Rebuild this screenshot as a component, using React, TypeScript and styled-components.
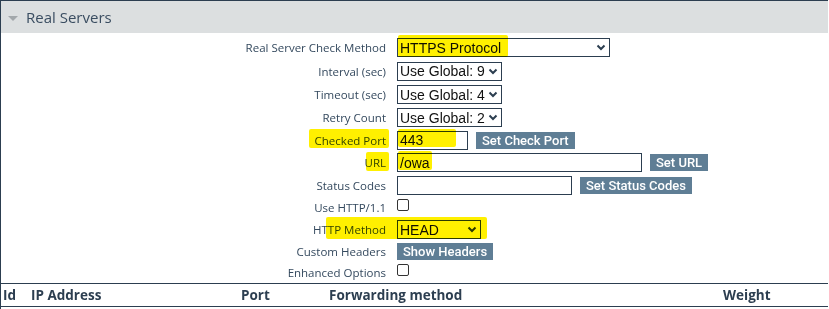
import React from "react";
import styled, { createGlobalStyle } from "styled-components";

const Global = createGlobalStyle`
  html, body { margin: 0; padding: 0; background: #ffffff; }
  body { width: 829px; height: 309px; overflow: hidden; }
`;

const Panel = styled.div`
  width: 828px;
  height: 309px;
  border-top: 1px solid #2c3e50;
  border-left: 1px solid #2c3e50;
  box-sizing: border-box;
  background: #fff;
`;

const Header = styled.div`
  height: 32px;
  background: #dcdfe0;
  display: flex;
  align-items: center;
  gap: 8px;
  padding-left: 7px;
  font-family: "Open Sans", sans-serif;
  font-size: 15px;
  color: #3a4d61;
`;

const Caret = styled.span`
  width: 0;
  height: 0;
  border-left: 5px solid transparent;
  border-right: 5px solid transparent;
  border-top: 5px solid #a3a8ab;
  margin-top: 2px;
`;

const Form = styled.div`
  position: relative;
  display: grid;
  grid-template-columns: 385px 1fr;
  column-gap: 11px;
  padding-top: 3px;
`;

const Label = styled.div<{ $h: number }>`
  height: ${(p) => p.$h}px;
  display: flex;
  align-items: center;
  justify-content: flex-end;
  font-family: "Open Sans", sans-serif;
  font-size: 11.5px;
  color: #34495e;
  white-space: nowrap;
`;

const Control = styled.div<{ $h: number; $top?: boolean }>`
  height: ${(p) => p.$h}px;
  display: flex;
  align-items: ${(p) => (p.$top ? "flex-start" : "center")};
  padding-top: ${(p) => (p.$top ? "2px" : "0")};
  box-sizing: border-box;
  gap: 8px;
`;

const SelectBox = styled.div<{ $w: number }>`
  width: ${(p) => p.$w}px;
  height: 19px;
  box-sizing: border-box;
  border: 1px solid #2c3e50;
  display: flex;
  align-items: center;
  justify-content: space-between;
  padding: 0 3px 0 2px;
  font-family: "Liberation Sans", Arial, sans-serif;
  font-size: 14px;
  color: #111;
  background: #fff;
`;

const TextInput = styled.div<{ $w: number }>`
  width: ${(p) => p.$w}px;
  height: 19px;
  box-sizing: border-box;
  border: 1px solid #2c3e50;
  display: flex;
  align-items: center;
  padding-left: 2px;
  font-family: "Liberation Sans", Arial, sans-serif;
  font-size: 14px;
  color: #111;
  background: #fff;
`;

const Button = styled.div`
  height: 17px;
  background: #5f7e95;
  color: #ffffff;
  font-family: Roboto, "Liberation Sans", sans-serif;
  font-weight: 500;
  font-size: 13px;
  line-height: 17px;
  padding: 0 6px;
  white-space: nowrap;
`;

const Check = styled.div`
  width: 12px;
  height: 12px;
  box-sizing: border-box;
  border: 1px solid #333;
  border-radius: 2px;
  background: #fff;
`;

const Marker = styled.div<{ $x: number; $y: number; $w: number; $h: number }>`
  position: absolute;
  left: ${(p) => p.$x}px;
  top: ${(p) => p.$y}px;
  width: ${(p) => p.$w}px;
  height: ${(p) => p.$h}px;
  background: #fff000;
  mix-blend-mode: multiply;
  border-radius: 2px;
  pointer-events: none;
`;

const Table = styled.div`
  margin-top: 1px;
  border-top: 1px solid #2c3e50;
  border-bottom: 1px solid #2c3e50;
  height: 22px;
  display: grid;
  grid-template-columns: 28px 210px 88px 394px 1fr;
  align-items: center;
  padding-left: 2px;
  font-family: "Open Sans", sans-serif;
  font-weight: 700;
  font-size: 13.5px;
  color: #2c3e50;
`;

const Chevron = () => (
  <svg width="10" height="7" viewBox="0 0 10 7">
    <polyline points="1.5,1.5 5,5 8.5,1.5" fill="none" stroke="#2c3e50" strokeWidth="2" />
  </svg>
);

const Select = ({ w, text }: { w: number; text: string }) => (
  <SelectBox $w={w}>
    <span>{text}</span>
    <Chevron />
  </SelectBox>
);

type Row = { label: string; h: number; top?: boolean; control: React.ReactNode };

const rows: Row[] = [
  { label: "Real Server Check Method", h: 23, control: <Select w={213} text="HTTPS Protocol" /> },
  { label: "Interval (sec)", h: 24, control: <Select w={105} text="Use Global: 9" /> },
  { label: "Timeout (sec)", h: 23, control: <Select w={105} text="Use Global: 4" /> },
  { label: "Retry Count", h: 23, control: <Select w={105} text="Use Global: 2" /> },
  {
    label: "Checked Port",
    h: 22,
    control: (
      <>
        <TextInput $w={71}>443</TextInput>
        <Button>Set Check Port</Button>
      </>
    ),
  },
  {
    label: "URL",
    h: 23,
    control: (
      <>
        <TextInput $w={245}>/owa</TextInput>
        <Button>Set URL</Button>
      </>
    ),
  },
  {
    label: "Status Codes",
    h: 23,
    control: (
      <>
        <TextInput $w={175} />
        <Button>Set Status Codes</Button>
      </>
    ),
  },
  { label: "Use HTTP/1.1", h: 21, top: true, control: <Check /> },
  { label: "HTTP Method", h: 23, control: <Select w={84} text="HEAD" /> },
  { label: "Custom Headers", h: 21, control: <Button>Show Headers</Button> },
  { label: "Enhanced Options", h: 20, top: true, control: <Check /> },
];

export default function App() {
  return (
    <>
      <Global />
      <Panel>
        <Header>
          <Caret />
          <span>Real Servers</span>
        </Header>
        <Form>
          {rows.map((r) => (
            <React.Fragment key={r.label}>
              <Label $h={r.h}>{r.label}</Label>
              <Control $h={r.h} $top={r.top}>
                {r.control}
              </Control>
            </React.Fragment>
          ))}
          <Marker $x={397} $y={2} $w={110} $h={22} />
          <Marker $x={308} $y={96} $w={80} $h={19} />
          <Marker $x={397} $y={96} $w={58} $h={18} />
          <Marker $x={365} $y={119} $w={23} $h={19} />
          <Marker $x={397} $y={118} $w={34} $h={19} />
          <Marker $x={325} $y={184} $w={161} $h={22} />
        </Form>
        <Table>
          <span>Id</span>
          <span>IP Address</span>
          <span>Port</span>
          <span>Forwarding method</span>
          <span>Weight</span>
        </Table>
      </Panel>
    </>
  );
}
